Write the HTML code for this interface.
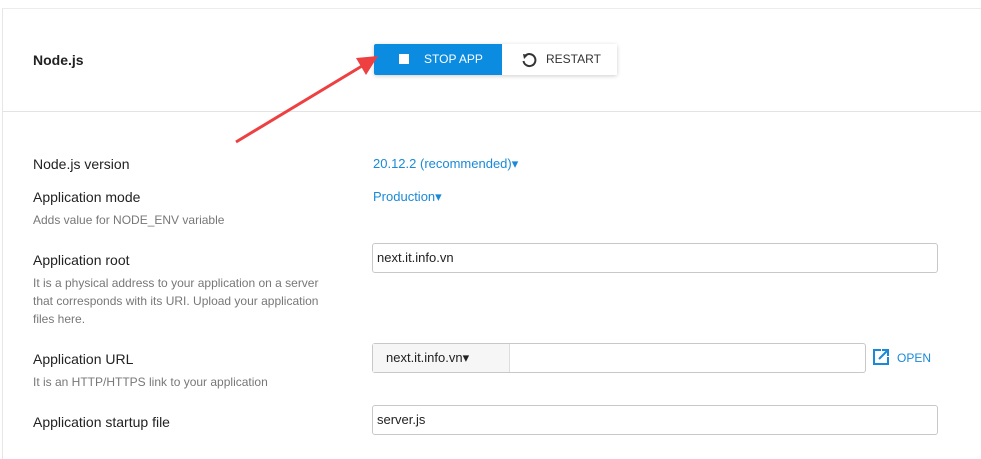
<!DOCTYPE html>
<html><head><style>
body{margin:0;width:981px;height:446px;background:#fff;font-family:"Liberation Sans",sans-serif;position:relative;overflow:hidden;color:#222}
.a{position:absolute}
.lbl{font-size:14px;color:#222}
.hint{font-size:12px;color:#777;line-height:18px}
.inp{position:absolute;left:372px;width:566px;height:30px;border:1px solid #c8c8c8;border-radius:3px;background:#fff;font-size:13px;box-sizing:border-box;padding-left:4px;line-height:28px}
.blue{color:#1a8ad8;font-size:13px}
</style></head><body>
<div class="a" style="left:2px;top:8px;width:990px;height:450px;border-left:1px solid #e6e6e6;border-top:1px solid #ececec"></div>
<div class="a" style="left:3px;top:111px;width:980px;height:1px;background:#e3e3e3"></div>
<div class="a lbl" style="left:33px;top:52px;font-weight:bold">Node.js</div>
<div class="a" style="left:374px;top:44px;width:243px;height:31px;box-shadow:0 1px 4px rgba(0,0,0,.2);border-radius:2px"></div>
<div class="a" style="left:374px;top:44px;width:128px;height:31px;background:#0b8ce0;border-radius:2px 0 0 2px;color:#fff;font-size:12px;line-height:31px">
<span class="a" style="left:25px;top:10px;width:10px;height:10px;background:#fff"></span><span class="a" style="left:50px">STOP APP</span></div>
<div class="a" style="left:502px;top:44px;width:115px;height:31px;background:#fff;font-size:12px;line-height:31px;color:#333">
<svg class="a" style="left:19px;top:8px" width="16" height="16" viewBox="0 0 16 16"><path d="M4 4 A6 6 0 1 1 2.5 9" fill="none" stroke="#333" stroke-width="2"/><path d="M2 2 L7 3 L3 7Z" fill="#333"/></svg>
<span class="a" style="left:44px">RESTART</span></div>
<svg class="a" style="left:0;top:0" width="400" height="160"><line x1="236" y1="142" x2="362" y2="66" stroke="#ee4040" stroke-width="3"/><path d="M378 56 L356 58 L366 75Z" fill="#ee4040"/></svg>

<div class="a lbl" style="left:33px;top:156px">Node.js version</div>
<div class="a blue" style="left:373px;top:156px">20.12.2 (recommended)▾</div>
<div class="a lbl" style="left:33px;top:189px">Application mode</div>
<div class="a blue" style="left:373px;top:189px">Production▾</div>
<div class="a hint" style="left:33px;top:211px">Adds value for NODE_ENV variable</div>
<div class="a lbl" style="left:33px;top:252px">Application root</div>
<div class="inp" style="top:243px">next.it.info.vn</div>
<div class="a hint" style="left:33px;top:274px;width:300px">It is a physical address to your application on a server that corresponds with its URI. Upload your application files here.</div>
<div class="a lbl" style="left:33px;top:351px">Application URL</div>
<div class="inp" style="top:343px;width:494px;padding:0"><div style="width:137px;height:100%;background:#f6f6f6;border-right:1px solid #ddd;padding-left:13px;box-sizing:border-box">next.it.info.vn▾</div></div>
<svg class="a" style="left:873px;top:349px" width="16" height="16" viewBox="0 0 16 16"><path d="M8 1H1V15H15V8" fill="none" stroke="#1a8ad8" stroke-width="2"/><path d="M6 10L14 2M9 1H15V7" fill="none" stroke="#1a8ad8" stroke-width="2"/></svg>
<div class="a blue" style="left:897px;top:351px;font-size:12px">OPEN</div>
<div class="a hint" style="left:33px;top:373px">It is an HTTP/HTTPS link to your application</div>
<div class="a lbl" style="left:33px;top:414px">Application startup file</div>
<div class="inp" style="top:405px">server.js</div>
</body></html>
